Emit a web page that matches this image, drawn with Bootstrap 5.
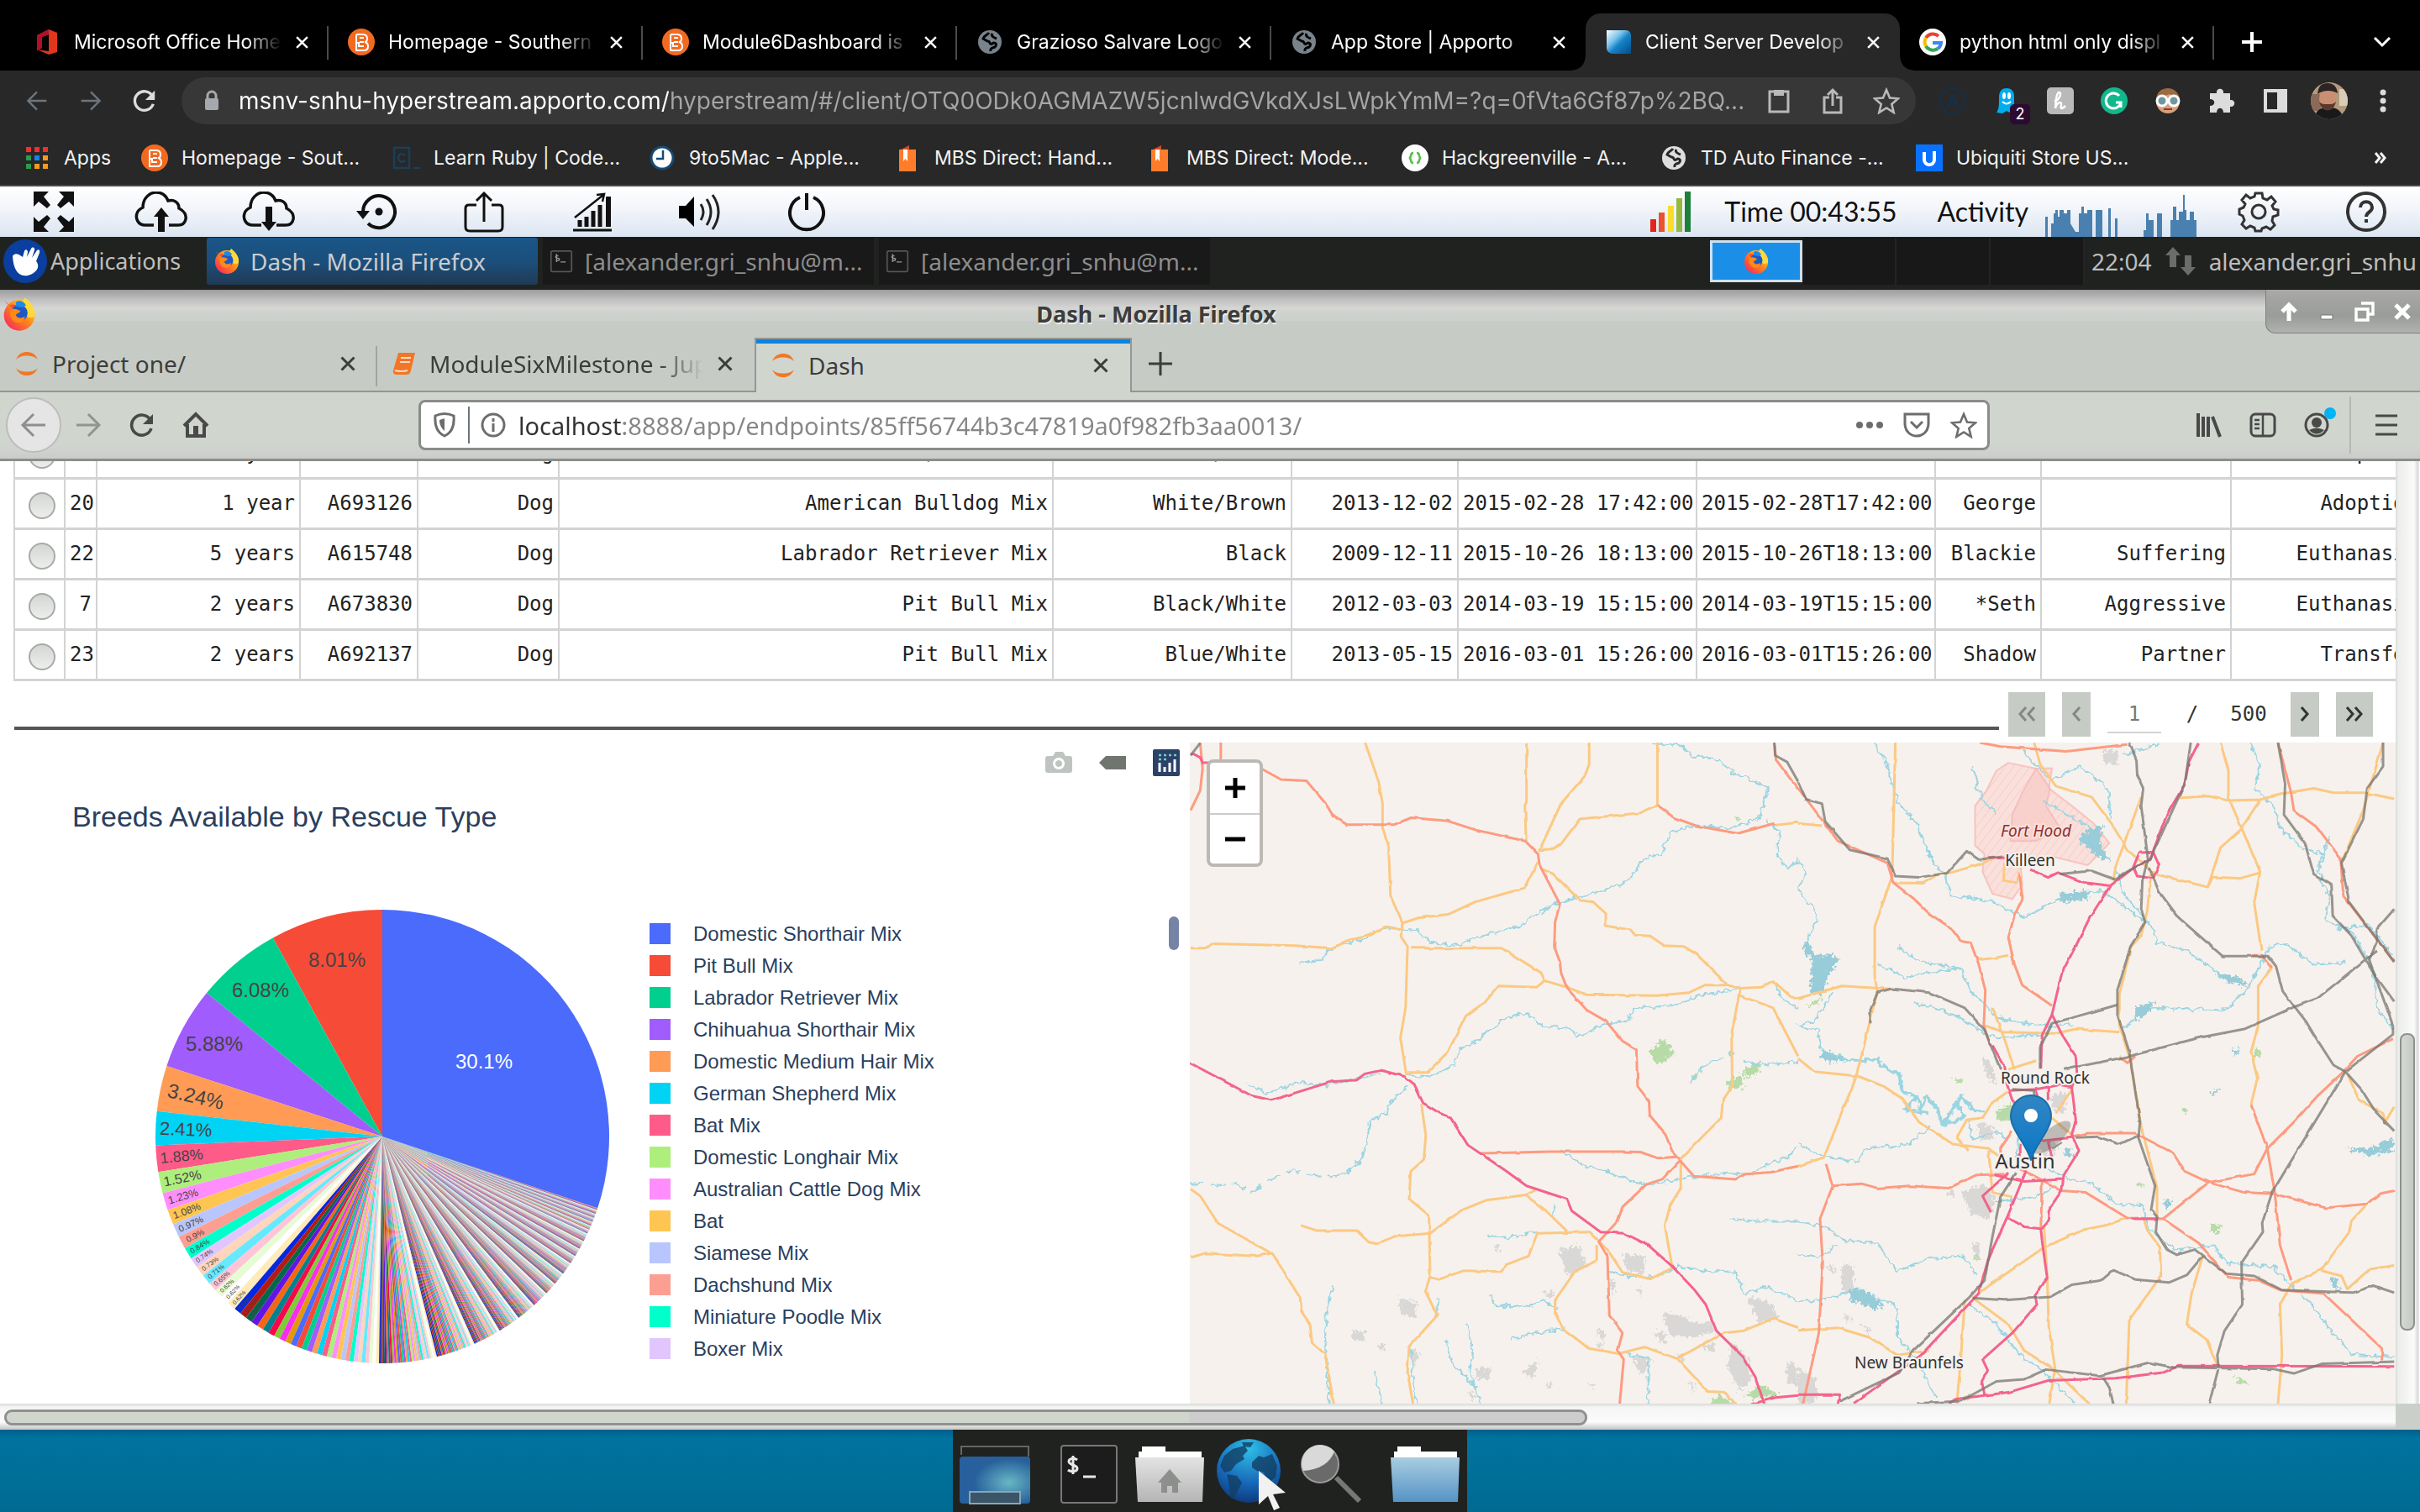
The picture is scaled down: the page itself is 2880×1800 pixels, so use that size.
<!DOCTYPE html>
<html lang="en">
<head>
<meta charset="utf-8">
<title>Client Server Development</title>
<meta name="viewport" content="width=device-width, initial-scale=1">
<link href="https://cdn.jsdelivr.net/npm/bootstrap@5.3.0/dist/css/bootstrap.min.css" rel="stylesheet">
<style>
  body { font-family: Inter, "Liberation Sans", sans-serif; font-size: 24px; line-height: 32px; background: #000; overflow: hidden; }
  svg { display: block; flex: none; overflow: visible; }
  a { color: inherit; text-decoration: none; }
  .plain { border: 0; background: none; padding: 0; color: inherit; display: flex; align-items: center; justify-content: center; flex: none; }
  .line { fill: none; stroke: currentColor; stroke-width: 3; }
  .i32 { width: 32px; height: 32px; }
  .i48 { width: 48px; height: 48px; }
  .clip-text { overflow: hidden; white-space: nowrap; line-height: 44px; }

  /* outer browser */
  .strip { height: 84px; padding: 16px 0 0 17px; background: #000; color: #fff; }
  .strip-tab { position: relative; width: 374px; padding: 0 14px 0 23px; border-right: 2px solid transparent; }
  .strip-tab::after { content: ""; position: absolute; right: -2px; top: 15px; height: 40px; width: 2px; background: #4b4b4b; }
  .strip-tab.quiet::after { display: none; }
  .strip-tab .clip-text { flex: 1; margin-left: 16px; font-size: 23px; -webkit-mask-image: linear-gradient(90deg, #000 80%, transparent 97%); }
  .strip-tab.on { background: #282828; border-radius: 18px 18px 0 0; }
  .strip-tab.on::before, .strip-tab.on::after { display: block; content: ""; position: absolute; top: auto; bottom: 0; width: 16px; height: 16px; }
  .strip-tab.on::before { left: -16px; background: radial-gradient(circle at 0 0, #000 15px, #282828 16px); }
  .strip-tab.on::after { right: -18px; background: radial-gradient(circle at 100% 0, #000 15px, #282828 16px); }
  .tools { height: 72px; background: #282828; color: #dcdcdc; padding-left: 12px; }
  .tools .plain { width: 64px; height: 56px; }
  .omni { height: 56px; border-radius: 28px; background: #373737; padding: 0 3px 0 20px; margin-left: 12px; color: #b9b9b9; }
  .omni input { flex: 1; min-width: 0; border: 0; outline: 0; font-size: 28px; padding: 0; margin-left: 16px; -webkit-text-fill-color: transparent; -webkit-background-clip: text; background-clip: text; background-color: transparent; background-image: linear-gradient(90deg, #fff 512px, #a5a5a5 512px); }
  .ghost-count { position: absolute; right: 4px; bottom: 0; width: 24px; height: 24px; line-height: 24px; font-size: 18px; background: #2d0a30; color: #fff; border-radius: 5px; text-align: center; }
  .favs { height: 66px; background: #282828; color: #f2f2f2; border-bottom: 2px solid #4a4a4a; padding-left: 28px; font-size: 23px; display: grid; align-items: center; grid-template-columns: 140px 300px 304px 292px 300px 304px 308px 304px 1fr; }
  .favs a { display: flex; align-items: center; gap: 16px; white-space: nowrap; }

  /* streaming toolbar */
  .stream { height: 60px; background: linear-gradient(#fff, #f2f5fa 45%, #dbe5f1); color: #111; font-family: Lato, sans-serif; font-size: 32px; }
  .stream .plain { width: 128px; height: 60px; }
  .clock { margin: 0 48px 0 40px; }

  /* desktop panel */
  .panel { height: 63px; background: #20221f; color: #bdbdbd; font-family: "Noto Sans", sans-serif; font-size: 28px; padding-bottom: 6px; }
  .panel .task { width: 394px; height: 56px; padding: 0 8px; gap: 14px; margin-right: 6px; justify-content: flex-start; color: #8d8d8d; background: #191919; }
  .panel .task.on { background: linear-gradient(#1a5687, #1b4f7c 50%, #213a55); color: #c9ccd0; border-radius: 3px; gap: 12px; }
  .apps.plain { width: 246px; padding-left: 4px; justify-content: flex-start; font-size: 27px; }
  .desk { width: 112px; height: 56px; background: #181818; border-right: 2px solid #242424; }
  .desk.on { background: #1b8fe8; border: 3px solid #cfe0ee; height: 50px; width: 110px; }

  /* inner browser */
  .win { font-family: "Noto Sans", sans-serif; font-size: 28px; color: #3c3d3c; }
  .win-title { height: 57px; padding: 4px 0 4px 2px; background: linear-gradient(#9c9c9c 0, #bfc0bf 12px, #d6d6d5 22px, #ced3cc 27px, #cecfce 37px, #c7cbc5 38px); font-size: 27px; font-weight: 700; text-shadow: 1px 2px 0 #eee; }
  .win-title span { padding: 9px 0 0 12px; }
  .win-btns { margin-top: -4px; height: 52px; width: 184px; border-radius: 0 0 0 12px; background: linear-gradient(#a9aaa8, #9a9c99 60%, #b0b2af); border: 1px solid #7d7f7c; color: #fff; border-top: 0; border-right: 0; }
  .win-btns .plain { width: 45px; }
  .win-tabs { height: 65px; background: #c7cbc5; }
  .win-tab { position: relative; width: 449px; padding: 0 25px 0 18px; border-bottom: 2px solid #949694; }
  .win-tab .clip-text { flex: 1; margin-left: 16px; }
  .win-tab.sep::after { content: ""; position: absolute; right: 0; top: 10px; height: 48px; width: 2px; background: #a2a4a1; }
  .win-tab.on { background: #d0d5ce; border: 2px solid #949694; border-bottom: 0; }
  .win-tab.on::before { content: ""; position: absolute; left: 0; right: 0; top: 0; height: 5px; background: #0a84e0; }
  .fade-end { -webkit-mask-image: linear-gradient(90deg, #000 84%, transparent); }
  .win-nav { height: 82px; background: linear-gradient(#d0d5ce 80%, #cbcccb); border-bottom: 3px solid #8c8e8c; color: #484948; padding-left: 7px; }
  .win-nav .plain { width: 64px; height: 66px; }
  .back-btn.plain { width: 66px; border-radius: 50%; background: #e4e5e4; border: 2px solid #bcbdbb; color: #8d8e8d; }
  .addr { height: 60px; width: 1870px; margin-left: 233px; background: #fff; border: 3px solid #8a8c8a; border-radius: 8px; color: #6c6d6c; }
  .addr .plain { width: 56px; }
  .addr input { flex: 1; min-width: 0; border: 0; outline: 0; padding: 2px 0 0 2px; font-size: 29px; -webkit-text-fill-color: transparent; -webkit-background-clip: text; background-clip: text; background-image: linear-gradient(90deg, #303130 127px, #858685 127px); }

  .view { background: #fff; min-height: 0; }
  .doc { min-width: 0; overflow: hidden; }
  .records { table-layout: fixed; width: 3012px; margin: -41px 0 0 16px; border-collapse: collapse; font: 24px/32px "DejaVu Sans Mono", monospace; color: #222; }
  .records td { height: 60px; padding: 0 5px; border: 2px solid #d3d3d3; border-top-width: 3px; border-bottom-width: 3px; text-align: right; white-space: nowrap; overflow: hidden; }
  .records td:first-child { padding: 0 2px 0 8px; }
  .records td:last-child { padding-right: 151px; }
  .records input { appearance: none; display: block; width: 32px; height: 32px; margin: 6px auto 0; border: 2px solid #a7aaa6; border-radius: 50%; background: linear-gradient(#d3d7d2, #eceeec); }
  .pager { height: 73px; padding: 0 27px 0 17px; gap: 20px; font: 24px/32px "DejaVu Sans Mono", monospace; color: #333; }
  .pager hr { margin: 0 -9px 15px 0; border: 0; height: 4px; background: #565656; opacity: 1; align-self: flex-end; flex: 1; }
  .pager .plain { width: 44px; height: 53px; background: #c7cbc5; margin-top: 13px; }
  .pager .thin { width: 34px; }
  .pager .plain:disabled { color: #858785; }
  .pager input { width: 64px; height: 44px; border: 0; border-bottom: 2px solid #d3d3d3; text-align: center; color: #777; padding: 0; margin: 18px 0 0; }
  .pager span { width: 34px; text-align: center; margin-top: 23px; }
  .pager span.total { width: 60px; }

  .plot { width: 1416px; font-family: "Liberation Sans", sans-serif; color: #2a3f5f; flex: none; }
  .modebar { gap: 32px; padding: 8px 12px 0 0; }
  .plot h2 { font-size: 34px; line-height: 40px; margin: 28px 0 81px 86px; font-weight: 400; }
  .pie { width: 560px; height: 560px; margin-left: 175px; }
  .legend-list { margin: 20px 0 0 38px; padding: 0; list-style: none; line-height: 38px; font-size: 24px; }
  .legend-list li { display: flex; align-items: center; gap: 27px; height: 38px; white-space: nowrap; }
  .legend-list i { width: 25px; height: 25px; }
  .legend-bar { width: 12px; height: 40px; border-radius: 6px; background: #7583a5; margin: 18px 13px 0 auto; }

  .geo { position: relative; background: #f6f1ed; overflow: hidden; }
  .geo svg { width: 100%; height: 100%; }
  .geo path { vector-effect: non-scaling-stroke; fill: none; stroke-linejoin: round; }
  .geo .minor path { stroke: #fcc982; stroke-width: 3; }
  .geo .major path { stroke: #fd9b80; stroke-width: 3; }
  .geo .mway path { stroke: #f4638b; stroke-width: 3; }
  .geo .rail path { stroke: #777670; stroke-width: 3; opacity: .75; }
  .geo .water path { stroke: #9bd5e2; stroke-width: 2; }
  .geo .lake path { fill: #97ccd8; stroke: none; }
  .geo .built path { fill: #d9d8d6; stroke: none; }
  .geo .wood path { fill: #b7dba7; stroke: none; }
  .geo text { font-family: "Noto Sans", sans-serif; text-anchor: middle; fill: #333; paint-order: stroke; stroke: #f6f1ed; stroke-width: 4px; stroke-linejoin: round; }
  .zoomer { position: absolute; left: 20px; top: 20px; width: 67px; border: 4px solid #bcb9b5; border-radius: 8px; background: #fff; overflow: hidden; color: #000; }
  .zoomer .plain { width: 100%; height: 60px; }
  .zoomer .plain + .plain { border-top: 2px solid #ccc; }

  .vbar { width: 29px; flex: none; background: linear-gradient(90deg, #d8dad7 0, #eceeeb 3px, #fbfbfb 22px, #d5d5d5 27px, #fff 28px); padding-top: 681px; }
  .vbar div { width: 18px; height: 354px; margin-left: 5px; border: 2px solid #8f918f; border-radius: 8px; background: linear-gradient(90deg, #d5d9d3, #c5c9c4); }
  .hbar { height: 31px; background: linear-gradient(#d8dad7 0, #f4f5f4 4px, #fbfbfb 22px, #c9cac9 30px); padding: 7px 0 0 5px; position: relative; }
  .hbar div { width: 1884px; height: 19px; border: 3px solid #8f918f; border-radius: 9px; background: linear-gradient(90deg, #d0d5ce 75%, #cccdcc 75%); }
  .hbar i { position: absolute; right: 0; top: 0; width: 29px; height: 100%; background: #cbcfca; }
  .ground { height: 98px; background: linear-gradient(#00608a, #0073a0 10px, #006f98 60%, #006a92); }
  .dock { width: 612px; background: #20221f; padding: 10px 2px 0; }
  .dock .plain { width: 96px; height: 86px; }
</style>
</head>
<body class="vh-100 d-flex flex-column">

<svg width="0" height="0" class="position-absolute" aria-hidden="true">
  <defs>
    <linearGradient id="gFlame" x1="1" y1="0" x2="0" y2="1"><stop offset="0" stop-color="#fff44f"/><stop offset=".45" stop-color="#ff8a16"/><stop offset="1" stop-color="#f5156c"/></linearGradient>
    <linearGradient id="gFold" x1="0" y1="0" x2="0" y2="1"><stop offset="0" stop-color="#a9cde2"/><stop offset="1" stop-color="#5593c4"/></linearGradient>
    <linearGradient id="gGrey" x1="0" y1="0" x2="0" y2="1"><stop offset="0" stop-color="#e3e3e3"/><stop offset="1" stop-color="#b5b5b5"/></linearGradient>
    <linearGradient id="gBlue" x1="0" y1="0" x2="1" y2="1"><stop offset="0" stop-color="#fff"/><stop offset=".35" stop-color="#7cc4ec"/><stop offset=".55" stop-color="#1583c8"/><stop offset="1" stop-color="#044c86"/></linearGradient>
    <symbol id="x" viewBox="0 0 16 16"><path d="M2 2l12 12M14 2L2 14" fill="none" stroke="currentColor" stroke-width="2.4"/></symbol>
    <symbol id="fox" viewBox="0 0 32 32"><circle cx="16" cy="17" r="14" fill="url(#gFlame)"/><path d="M21 1c5 4 10 9 9 17-3 2-8 1-11-4-2-4-1-8 2-13z" fill="#ffd93b"/><path d="M3 4c1 2 2 3 4 4 2-1 4-1 6 0l-2 4z" fill="#ff4b36"/><circle cx="16" cy="15" r="7.5" fill="#1d57c8"/><path d="M8 12c4-2 7 0 9 1-1 3-4 2-4 4 1 3 5 3 8 1 0 5-5 7-9 5s-5-7-4-11z" fill="#ff8a16"/><path d="M13 5c3-2 7-1 9 3l-3 2-6-1z" fill="#1d8ae6"/></symbol>
    <symbol id="bb" viewBox="0 0 32 32"><circle cx="16" cy="16" r="16" fill="#f26a21"/><path d="M10 7h8q5 0 5 5 0 4-3 4 4 1 4 5 0 5-5 5h-9v-4M10 7v10h3v4h6M14 11h5M14 16h5M10 17v5" fill="none" stroke="#fff" stroke-width="2"/></symbol>
    <symbol id="globe" viewBox="0 0 28 28"><circle cx="14" cy="14" r="14" fill="currentColor"/><path d="M13 3c-2 3-6 3-7 7l5 3c4-1 2 5 6 3 2-2 7 0 3 4-3 1-6 1-5 5M17 4c-2 3 2 5 5 6" fill="none" stroke="var(--hole)" stroke-width="3"/></symbol>
    <symbol id="term" viewBox="0 0 32 32"><rect x="2" y="2" width="28" height="28" rx="2" fill="#191919" stroke="#555" stroke-width="2"/><path d="M12 9c-4-2-5 3-1 3s3 4-2 3M9.500 6v11M15 17h7" fill="none" stroke="#999" stroke-width="1.500"/></symbol>
    <symbol id="cloud" viewBox="0 0 64 48"><path d="M23 40H13C4 40 1 32 3 26c1-4 5-6 7-7C10 8 18 1 26 1c8 0 12 5 14 10 7-2 13 2 13 9 6 3 9 8 8 13s-5 7-9 7H41" fill="none" stroke="currentColor" stroke-width="3.500"/></symbol>
    <symbol id="jup" viewBox="0 0 30 32"><path d="M1 11C4 3 10 1 15 1s11 2 14 10C24 4 6 4 1 11zM1 21c3 8 9 10 14 10s11-2 14-10c-5 7-23 7-28 0z" fill="#f37626"/></symbol>
    <symbol id="star" viewBox="0 0 32 32"><path d="M16 3l4 9.500 10 .8-7.700 6.600 2.400 10L16 24.500 7.300 30l2.400-10L2 13.300l10-.8z" fill="none" stroke="currentColor" stroke-width="2.600"/></symbol>
    <symbol id="book" viewBox="0 0 24 32"><path d="M2 7l12-6v30H2z" fill="#d24a25"/><rect x="2" y="6" width="20" height="26" fill="#ff7c2b"/><path d="M7 6h5v14l-2.500-3L7 20z" fill="#fff"/></symbol>
    <symbol id="reload" viewBox="0 0 32 32"><path d="M26 10A12 12 0 1 0 27 20" fill="none" stroke="currentColor" stroke-width="3.600"/><path d="M29 3v12H17z" fill="currentColor"/></symbol>
    <symbol id="left" viewBox="0 0 32 32"><path d="M30 16H4M16 3L3 16l13 13" fill="none" stroke="currentColor" stroke-width="3"/></symbol>
    <symbol id="right" viewBox="0 0 32 32"><path d="M2 16h26M16 3l13 13-13 13" fill="none" stroke="currentColor" stroke-width="3"/></symbol>
  </defs>
</svg>

<header>
  <nav class="strip d-flex" aria-label="Tabs">
    <div class="strip-tab d-flex align-items-center"><svg class="i32" viewBox="0 0 32 32"><path d="M4 8L18 1l10 4v23l-10 3-14-6 14 2V7l-8 3v13l-6 3z" fill="#e0361b"/><path d="M4 8L18 1v6l-8 3v13l-6 3z" fill="#b01128"/></svg><span class="clip-text">Microsoft Office Home</span><button class="plain i32" aria-label="Close tab"><svg width="17" height="17"><use href="#x"/></svg></button></div>
    <div class="strip-tab d-flex align-items-center"><svg class="i32"><use href="#bb"/></svg><span class="clip-text">Homepage - Southern</span><button class="plain i32" aria-label="Close tab"><svg width="17" height="17"><use href="#x"/></svg></button></div>
    <div class="strip-tab d-flex align-items-center"><svg class="i32"><use href="#bb"/></svg><span class="clip-text">Module6Dashboard is</span><button class="plain i32" aria-label="Close tab"><svg width="17" height="17"><use href="#x"/></svg></button></div>
    <div class="strip-tab d-flex align-items-center"><svg class="i32" viewBox="-2 -2 32 32" style="color:#79838c;--hole:#000"><use href="#globe" width="28" height="28"/></svg><span class="clip-text">Grazioso Salvare Logo</span><button class="plain i32" aria-label="Close tab"><svg width="17" height="17"><use href="#x"/></svg></button></div>
    <div class="strip-tab quiet d-flex align-items-center"><svg class="i32" viewBox="-2 -2 32 32" style="color:#79838c;--hole:#000"><use href="#globe" width="28" height="28"/></svg><span class="clip-text">App Store | Apporto</span><button class="plain i32" aria-label="Close tab"><svg width="17" height="17"><use href="#x"/></svg></button></div>
    <div class="strip-tab on d-flex align-items-center"><svg class="i32" viewBox="0 0 32 32"><path d="M2 2h23c4 0 6 3 6 7v21H10c-5 0-8-3-8-7z" fill="url(#gBlue)"/></svg><span class="clip-text">Client Server Develop</span><button class="plain i32" aria-label="Close tab"><svg width="17" height="17"><use href="#x"/></svg></button></div>
    <div class="strip-tab d-flex align-items-center"><svg class="i32" viewBox="0 0 32 32"><circle cx="16" cy="16" r="16" fill="#fff"/><g fill="none" stroke-width="4"><path d="M23 9A10 10 0 0 0 8 11" stroke="#ea4335"/><path d="M8 11a10 10 0 0 0 0 10" stroke="#fbbc05"/><path d="M8 21a10 10 0 0 0 14 3" stroke="#34a853"/><path d="M22 24a10 10 0 0 0 4-7H16" stroke="#4285f4"/></g></svg><span class="clip-text">python html only displ</span><button class="plain i32" aria-label="Close tab"><svg width="17" height="17"><use href="#x"/></svg></button></div>
    <button class="plain ms-4" aria-label="New tab" style="width:42px"><svg width="24" height="24" viewBox="0 0 24 24"><path d="M12 0v24M0 12h24" stroke="#fff" stroke-width="4"/></svg></button>
    <button class="plain ms-auto me-3" aria-label="Search tabs" style="width:58px"><svg width="20" height="12" viewBox="0 0 20 12"><path class="line" d="M1 1l9 9 9-9"/></svg></button>
  </nav>

  <div class="tools d-flex align-items-center">
    <button class="plain text-secondary" aria-label="Back"><svg width="26" height="26"><use href="#left"/></svg></button>
    <button class="plain text-secondary" aria-label="Forward"><svg width="26" height="26"><use href="#right"/></svg></button>
    <button class="plain" aria-label="Reload"><svg width="30" height="30"><use href="#reload"/></svg></button>
    <div class="omni flex-grow-1 d-flex align-items-center">
      <svg class="i32" viewBox="0 0 32 32"><rect x="8" y="13" width="16" height="14" rx="2" fill="#a5a9ae"/><path d="M11 14V10a5 5 0 0 1 10 0v4" fill="none" stroke="#a5a9ae" stroke-width="3"/></svg>
      <input type="text" aria-label="Address" value="msnv-snhu-hyperstream.apporto.com/hyperstream/#/client/OTQ0ODk0AGMAZW5jcnlwdGVkdXJsLWpkYmM=?q=0fVta6Gf87p%2BQ...">
      <button class="plain" aria-label="Copy"><svg class="i32" viewBox="0 0 32 32"><path class="line" d="M5 5h22v24H5z"/><path d="M10 3h12v7H10z" fill="currentColor"/></svg></button>
      <button class="plain" aria-label="Share"><svg class="i32" viewBox="0 0 32 32"><path class="line" d="M12 12H6v18h20V12h-6M16 22V3M10 9l6-6 6 6" stroke-width="2.600"/></svg></button>
      <button class="plain" aria-label="Bookmark"><svg class="i32"><use href="#star"/></svg></button>
    </div>
    <div class="d-flex ms-2 ps-1">
      <button class="plain" aria-label="Apollo"><svg class="i32" viewBox="0 0 32 32"><circle cx="16" cy="16" r="15" fill="none" stroke="#14304a" stroke-width="2"/><path d="M10 23l6-14 6 14M13 19h7" fill="none" stroke="#14304a" stroke-width="3"/></svg></button>
      <button class="plain position-relative" aria-label="Ghostery"><svg class="i32" viewBox="0 0 32 32"><path d="M7 12c0-8 4-11 9-11s9 3 9 10v15l-5 4-4-2-5 3-7-1c3-4 3-9 3-18z" fill="#00aef0"/><ellipse cx="13" cy="10" rx="2" ry="4" fill="#fff"/><ellipse cx="19" cy="10" rx="2" ry="4" fill="#fff"/><path d="M11 17q5 5 10 0" stroke="#fff" stroke-width="2" fill="none"/></svg><span class="ghost-count">2</span></button>
      <button class="plain" aria-label="Honey"><svg class="i32" viewBox="0 0 32 32"><rect width="32" height="32" rx="5" fill="#b9b9b9"/><path d="M9 17c7-3 9-12 5-11-4 2-3 14-4 19 2-8 8-9 7-4-1 4 0 6 5 1" fill="none" stroke="#fff" stroke-width="2.500"/></svg></button>
      <button class="plain" aria-label="Grammarly"><svg class="i32" viewBox="0 0 32 32"><circle cx="16" cy="16" r="16" fill="#11b88c"/><path d="M22 10a9 9 0 1 0 2 8h-6M24 18v6" fill="none" stroke="#fff" stroke-width="3"/></svg></button>
      <button class="plain" aria-label="Profile switcher"><svg class="i32" viewBox="0 0 32 32"><circle cx="16" cy="17" r="14" fill="#d9a07c"/><path d="M2 14C3 4 10 1 16 1s13 4 14 13L18 8z" fill="#9b6b43"/><circle cx="9" cy="16" r="6" fill="#6e97a0" stroke="#fff" stroke-width="3"/><circle cx="23" cy="16" r="6" fill="#6e97a0" stroke="#fff" stroke-width="3"/><path d="M11 26h10" stroke="#8a3a34" stroke-width="2"/></svg></button>
      <button class="plain" aria-label="Extensions"><svg class="i32" viewBox="0 0 32 32"><path d="M2 7h8c-1-7 9-7 8 0h8v8c7-1 7 9 0 8v7h-8c0-7-8-7-8 0H2v-8c7 0 7-8 0-8z" fill="currentColor"/></svg></button>
      <button class="plain" aria-label="Side panel"><svg class="i32" viewBox="0 0 32 32"><path d="M2 2h28v28H2zM6 6v20h12V6z" fill="currentColor" fill-rule="evenodd"/></svg></button>
      <button class="plain" aria-label="Profile"><svg width="44" height="44" viewBox="0 0 44 44"><clipPath id="face"><circle cx="22" cy="22" r="22"/></clipPath><g clip-path="url(#face)"><path d="M0 0h44v44H0z" fill="#b49a7c"/><path d="M0 14h12v20H0z" fill="#8b6a58"/><path d="M34 8h10v20H34z" fill="#d9cdb8"/><path d="M4 44c2-12 8-14 18-14s14 4 18 14z" fill="#18191b"/><ellipse cx="20" cy="20" rx="10" ry="13" fill="#c98f73"/><path d="M10 23c3 14 17 14 20 0-3 3-5 3-10 3s-7 0-10-3z" fill="#5b3a2b"/><path d="M8 14C9 4 13 1 20 1s11 4 12 12c-7-4-17-4-24 1z" fill="#2b2422"/></g></svg></button>
      <button class="plain" aria-label="Menu"><svg width="8" height="28" viewBox="0 0 8 28"><circle cx="4" cy="4" r="3.500" fill="currentColor"/><circle cx="4" cy="14" r="3.500" fill="currentColor"/><circle cx="4" cy="24" r="3.500" fill="currentColor"/></svg></button>
    </div>
    <span class="ms-2 ps-1"></span>
  </div>

  <nav class="favs" aria-label="Bookmarks">
    <a href="#"><svg class="i32" viewBox="-3 -3 32 32"><path d="M0 0h6v6H0zM10 0h6v6h-6zM20 0h6v6h-6z" fill="#f0302f"/><path d="M0 10h6v6H0zM0 20h6v6H0z" fill="#2d9a4e"/><path d="M10 10h6v6h-6z" fill="#1484f0"/><path d="M20 10h6v6h-6zM10 20h6v6h-6zM20 20h6v6h-6z" fill="#f59a1d"/></svg>Apps</a>
    <a href="#"><svg class="i32"><use href="#bb"/></svg>Homepage - Sout...</a>
    <a href="#"><svg class="i32" viewBox="0 0 32 32"><path d="M1 4h18v24H1zM14 13c-5-4-8 0-8 3s3 7 8 3M24 28h8" fill="none" stroke="#1b3f57" stroke-width="2.500"/></svg>Learn Ruby | Code...</a>
    <a href="#"><svg class="i32" viewBox="0 0 32 32"><circle cx="16" cy="16" r="13" fill="#fff" stroke="#154a75" stroke-width="3"/><path d="M17 7v10h-8" fill="none" stroke="#154a75" stroke-width="2.500"/></svg>9to5Mac - Apple...</a>
    <a href="#"><svg class="i32"><use href="#book"/></svg>MBS Direct: Hand...</a>
    <a href="#"><svg class="i32"><use href="#book"/></svg>MBS Direct: Mode...</a>
    <a href="#"><svg class="i32" viewBox="0 0 32 32"><circle cx="16" cy="16" r="16" fill="#fff"/><path d="M14 10c-5 0-1 5-5 6 4 1 0 6 5 6M18 10c5 0 1 5 5 6-4 1 0 6-5 6" fill="none" stroke="#59bd45" stroke-width="2.500"/></svg>Hackgreenville - A...</a>
    <a href="#"><svg class="i32" viewBox="-2 -2 32 32" style="color:#dedede;--hole:#282828"><use href="#globe" width="28" height="28"/></svg>TD Auto Finance -...</a>
    <div class="d-flex justify-content-between"><a href="#"><svg class="i32" viewBox="0 0 32 32"><path d="M0 0h32v32H0z" fill="#0871ff"/><path d="M10 9v9c0 8 12 8 12 0V8" fill="none" stroke="#fff" stroke-width="4"/></svg>Ubiquiti Store US...</a><button class="plain me-4 pe-3" aria-label="More bookmarks"><svg width="14" height="14" viewBox="0 0 14 14"><path class="line" d="M1 1l5 6-5 6M7 1l5 6-5 6" stroke-width="2"/></svg></button></div>
  </nav>

  <div class="stream d-flex align-items-center">
    <button class="plain" aria-label="Full screen"><svg class="i48" viewBox="0 0 48 48"><path d="M0 0h18l-6 6 8 10-4 4-10-8-6 6zM48 0v18l-6-6-10 8-4-4 8-10-6-6zM0 48V30l6 6 10-8 4 4-8 10 6 6zM48 48H30l6-6-8-10 4-4 10 8 6-6z" fill="#111"/></svg></button>
    <button class="plain" aria-label="Upload"><svg width="64" height="48" viewBox="0 0 64 48"><use href="#cloud"/><path d="M32 48V24" stroke="#111" stroke-width="8"/><path d="M23 30l9-11 9 11z" fill="#111"/></svg></button>
    <button class="plain" aria-label="Download"><svg width="64" height="48" viewBox="0 0 64 48"><use href="#cloud"/><path d="M32 18v22" stroke="#111" stroke-width="8"/><path d="M23 36l9 11 9-11z" fill="#111"/></svg></button>
    <button class="plain" aria-label="Restore"><svg class="i48" viewBox="0 0 48 48"><path d="M8 24a19 19 0 1 1 6 14" fill="none" stroke="#111" stroke-width="4"/><path d="M0 23h16l-8 10z" fill="#111"/><circle cx="27" cy="24" r="4.500" fill="#111"/></svg></button>
    <button class="plain" aria-label="Share"><svg class="i48" viewBox="0 0 48 48"><path class="line" stroke-width="4" d="M15 16H6q-4 0-4 4v22q0 5 5 5h34q5 0 5-5V20q0-4-4-4h-9M24 36V2M15 11l9-9 9 9"/></svg></button>
    <button class="plain" aria-label="Statistics"><svg class="i48" viewBox="0 0 48 48"><path d="M2 46h46" stroke="#111" stroke-width="3"/><path d="M10 42v-8M18 42V30M26 42V23M34 42V16" stroke="#111" stroke-width="5"/><path d="M44 42V6" stroke="#111" stroke-width="6"/><path d="M4 31L38 4M30 4l9-1-2 9" fill="none" stroke="#111" stroke-width="2.500"/></svg></button>
    <button class="plain" aria-label="Sound"><svg class="i48" viewBox="0 0 48 48"><path d="M0 17h8L18 6v36L8 32H0z" fill="#000"/><path d="M26 15q6 9 0 19M33 9q10 15 0 31M40 4q14 20 0 41" fill="none" stroke="#222" stroke-width="3"/></svg></button>
    <button class="plain" aria-label="Power"><svg class="i48" viewBox="0 0 48 48"><path d="M16 7a20 20 0 1 0 16 0M24 2v20" fill="none" stroke="#111" stroke-width="4"/></svg></button>
    <div class="ms-auto d-flex align-items-center">
      <svg class="i48" viewBox="0 0 48 48"><path d="M0 33h7v15H0z" fill="#e3251d"/><path d="M10 25h7v23h-7z" fill="#e8532b"/><path d="M21 17h7v31h-7z" fill="#f8de2a"/><path d="M31 8h7v40h-7z" fill="#94b93e"/><path d="M41 0h7v48h-7z" fill="#1c8039"/></svg>
      <span class="clock">Time 00:43:55</span><span class="me-3 pe-1">Activity</span>
      <svg width="182" height="60" viewBox="0 0 182 60"><path fill="#4a80b0" d="M0 60V36h3v24h4V44h3V32h2V28h3v8h2V28h5v4h4V28h4v16l6 10h4V32h3V24h3v8h4V28h6v32h4V28h8v32h7V26h3v34h5V38h3v22zM117 60V52h3V32h3v8h6v20h4V32h6v28h10V40h3V24h4v16h3V30h5V10h2V28h2V40h4V30h5v10h3v20z"/></svg>
      <button class="plain ms-2" aria-label="Settings"><svg class="i48" viewBox="0 0 48 48"><path d="M20 2h8l1 6 5 2 5-4 5 6-4 5 2 4 5 1v6l-6 2-1 5 3 5-5 5-5-3-5 2-1 3h-7l-1-4-5-2-5 3-5-5 3-5-2-5-4-2v-6l5-2 2-4-4-5 5-6 5 4 5-2z" fill="none" stroke="#333" stroke-width="3"/><circle cx="24" cy="24" r="8" fill="none" stroke="#333" stroke-width="3"/></svg></button>
      <button class="plain" aria-label="Help"><svg class="i48" viewBox="0 0 48 48"><circle cx="24" cy="24" r="22" fill="none" stroke="#333" stroke-width="4"/><path d="M17 19c0-9 14-9 14 0 0 6-7 5-7 11M24 33v4" fill="none" stroke="#333" stroke-width="4"/></svg></button>
    </div>
  </div>

  <div class="panel d-flex align-items-center">
    <button class="plain apps"><svg width="52" height="52" viewBox="0 0 52 52" class="me-1"><circle cx="26" cy="26" r="26" fill="#0a3fa0"/><path d="M11 20c2-4 6-3 9-1l3 2 2-7c1-3 4-2 4 1l-1 6 5-10c2-3 5-1 4 2l-3 9 6-9c2-2 4 0 3 3l-4 10c6 7-1 15-10 17-12 2-17-8-18-23z" fill="#fff"/></svg>Applications</button>
    <button class="plain task on"><svg class="i32"><use href="#fox"/></svg>Dash - Mozilla Firefox</button>
    <button class="plain task"><svg width="28" height="28"><use href="#term"/></svg>[alexander.gri_snhu@m...</button>
    <button class="plain task"><svg width="28" height="28"><use href="#term"/></svg>[alexander.gri_snhu@m...</button>
    <div class="ms-auto d-flex align-items-center">
      <button class="plain desk on" aria-label="Workspace 1"><svg class="i32"><use href="#fox"/></svg></button>
      <button class="plain desk" aria-label="Workspace 2"></button><button class="plain desk" aria-label="Workspace 3"></button><button class="plain desk" aria-label="Workspace 4"></button>
      <span class="ms-2 me-3">22:04</span>
      <svg width="36" height="34" viewBox="0 0 36 34"><path d="M0 10L9 0l9 10h-5v14H5V10zM18 24h5V10h8v14h5l-9 10z" fill="#6c6c6c"/></svg>
      <span class="ms-3 me-1">alexander.gri_snhu</span>
    </div>
  </div>
</header>

<main class="win d-flex flex-column flex-grow-1" style="min-height:0">
  <div class="win-title d-flex align-items-start">
    <svg width="42" height="42" class="mt-1"><use href="#fox"/></svg>
    <span class="flex-grow-1 text-center">Dash - Mozilla Firefox</span>
    <div class="win-btns d-flex ps-1">
      <button class="plain" aria-label="Shade"><svg width="22" height="22" viewBox="0 0 22 22"><path d="M11 22V4M3 11l8-8 8 8" fill="none" stroke="#fff" stroke-width="5"/></svg></button>
      <button class="plain" aria-label="Minimize"><svg width="22" height="22" viewBox="0 0 22 22"><path d="M4 15h14v5H4z" fill="#fff" stroke="#777"/></svg></button>
      <button class="plain" aria-label="Restore"><svg width="26" height="24" viewBox="0 0 26 24"><path d="M9 2h14v13h-5M3 9h14v13H3z" fill="none" stroke="#fff" stroke-width="3.500"/></svg></button>
      <button class="plain" aria-label="Close"><svg width="20" height="20" viewBox="0 0 20 20"><path d="M2 2l16 16M18 2L2 18" stroke="#fff" stroke-width="5"/></svg></button>
    </div>
  </div>
  <nav class="win-tabs d-flex" aria-label="Firefox tabs">
    <div class="win-tab sep d-flex align-items-center"><svg width="28" height="32"><use href="#jup"/></svg><span class="clip-text">Project one/</span><button class="plain" aria-label="Close tab"><svg width="20" height="20"><use href="#x"/></svg></button></div>
    <div class="win-tab d-flex align-items-center"><svg width="28" height="28" viewBox="0 0 28 28"><path d="M7 1h20l-5 21q-1 5-5 5H4q-4-1-3-5z" fill="#f37626"/><path d="M10 7h12M9 12h12M3 22q8 2 15 0" stroke="#f6dcc8" stroke-width="2" fill="none"/></svg><span class="clip-text fade-end">ModuleSixMilestone - Jupyter</span><button class="plain ms-3" aria-label="Close tab"><svg width="20" height="20"><use href="#x"/></svg></button></div>
    <div class="win-tab on d-flex align-items-center"><svg width="28" height="32"><use href="#jup"/></svg><span class="clip-text">Dash</span><button class="plain" aria-label="Close tab"><svg width="20" height="20"><use href="#x"/></svg></button></div>
    <div class="flex-grow-1 d-flex align-items-center" style="border-bottom:2px solid #949694"><button class="plain" aria-label="New tab" style="width:68px"><svg width="28" height="28" viewBox="0 0 28 28"><path class="line" d="M14 0v28M0 14h28"/></svg></button></div>
  </nav>
  <div class="win-nav d-flex align-items-center">
    <button class="plain back-btn" aria-label="Back"><svg class="i32"><use href="#left"/></svg></button>
    <button class="plain" aria-label="Forward" style="color:#929492"><svg class="i32"><use href="#right"/></svg></button>
    <button class="plain" aria-label="Reload"><svg class="i32"><use href="#reload"/></svg></button>
    <button class="plain" aria-label="Home"><svg class="i32" viewBox="0 0 32 32"><path d="M2 17L16 3l14 14M6 15v14h20V15" fill="none" stroke="currentColor" stroke-width="4"/><path d="M13 17h6v12h-6z" fill="currentColor"/></svg></button>
    <div class="addr d-flex align-items-center">
      <button class="plain" aria-label="Protection"><svg width="28" height="30" viewBox="0 0 28 30"><path class="line" d="M3 4q11-5 22 0c1 12-2 20-11 24C5 24 2 16 3 4z"/><path d="M14 7v15q-6-5-6-13z" fill="currentColor"/></svg></button>
      <span class="border-start border-2 border-secondary" style="height:44px"></span>
      <button class="plain" aria-label="Site information"><svg width="28" height="28" viewBox="0 0 28 28"><circle class="line" stroke-width="2" cx="14" cy="14" r="13"/><path d="M14 12v10M14 6v4" stroke="currentColor" stroke-width="3"/></svg></button>
      <input type="text" aria-label="Firefox address" value="localhost:8888/app/endpoints/85ff56744b3c47819a0f982fb3aa0013/">
      <button class="plain" aria-label="Page actions"><svg width="32" height="8" viewBox="0 0 32 8"><circle cx="4" cy="4" r="4" fill="currentColor"/><circle cx="16" cy="4" r="4" fill="currentColor"/><circle cx="28" cy="4" r="4" fill="currentColor"/></svg></button>
      <button class="plain" aria-label="Pocket"><svg width="32" height="30" viewBox="0 0 32 30"><path class="line" d="M2 2h28v11c0 20-28 20-28 0zM9 11l7 7 7-7" stroke-width="3.500"/></svg></button>
      <button class="plain" aria-label="Bookmark"><svg class="i32"><use href="#star"/></svg></button>
    </div>
    <div class="ms-auto d-flex align-items-center">
      <button class="plain" aria-label="Library"><svg class="i32" viewBox="0 0 32 32"><path d="M3 2v28M9 6v24M15 6v24M20 6l9 24" stroke="currentColor" stroke-width="4" fill="none"/></svg></button>
      <button class="plain" aria-label="Sidebar"><svg class="i32" viewBox="0 0 32 32"><rect class="line" x="2" y="3" width="28" height="26" rx="5" stroke-width="4"/><path d="M16 3v26M6 10h6M6 15h6M6 20h6" stroke="currentColor" stroke-width="2.500"/></svg></button>
      <button class="plain" aria-label="Account"><svg class="i32" viewBox="0 0 32 32"><circle class="line" cx="16" cy="16" r="13" stroke-width="2.500"/><circle cx="16" cy="13" r="6" fill="currentColor"/><path d="M7 22q9-5 18 0-9 9-18 0z" fill="currentColor"/><circle cx="32" cy="2" r="7" fill="#00b3f4"/></svg></button>
      <span class="border-start border-2" style="height:68px;margin:0 10px 0 7px;border-color:#b4b8b3!important"></span>
      <button class="plain" aria-label="Menu"><svg width="26" height="26" viewBox="0 0 26 26"><path class="line" d="M0 2h26M0 13h26M0 24h26" stroke-width="4"/></svg></button><span class="ps-2"></span>
    </div>
  </div>

  <div class="view d-flex flex-grow-1">
    <div class="doc flex-grow-1 d-flex flex-column">
      <table class="records">
        <colgroup><col style="width:60px"><col style="width:38px"><col style="width:242px"><col style="width:140px"><col style="width:168px"><col style="width:588px"><col style="width:284px"><col style="width:198px"><col style="width:284px"><col style="width:284px"><col style="width:126px"><col style="width:226px"><col style="width:374px"></colgroup>
        <tbody id="rows"></tbody>
      </table>
      <div class="pager d-flex">
        <hr>
        <button class="plain" disabled aria-label="First page"><svg width="22" height="18" viewBox="0 0 22 18"><path class="line" stroke-width="4" d="M10 1L3 9l7 8M20 1l-7 8 7 8"/></svg></button>
        <button class="plain thin" disabled aria-label="Previous page"><svg width="12" height="18" viewBox="0 0 12 18"><path class="line" stroke-width="4" d="M10 1L3 9l7 8"/></svg></button>
        <input type="text" value="1" aria-label="Page">
        <span>/</span><span class="total">500</span>
        <button class="plain thin" aria-label="Next page"><svg width="12" height="18" viewBox="0 0 12 18"><path class="line" stroke-width="4" d="M2 1l7 8-7 8"/></svg></button>
        <button class="plain" aria-label="Last page"><svg width="22" height="18" viewBox="0 0 22 18"><path class="line" stroke-width="4" d="M2 1l7 8-7 8M12 1l7 8-7 8"/></svg></button>
      </div>
      <div class="d-flex flex-grow-1" style="min-height:0">
        <section class="plot">
          <div class="modebar d-flex justify-content-end">
            <button class="plain" aria-label="Download plot"><svg class="i32" viewBox="0 0 32 32"><path d="M3 8h6l3-5h9l3 5h5q3 0 3 3v14q0 3-3 3H3q-3 0-3-3V11q0-3 3-3zM16 10a7 7 0 1 0 .1 0zM16 13a4 4 0 1 1-.1 0z" fill="#bfc4c0" fill-rule="evenodd"/></svg></button>
            <button class="plain" aria-label="Toggle hover"><svg class="i32" viewBox="0 0 32 32"><path d="M0 16l8-8h24v16H8z" fill="#70766f"/></svg></button>
            <a href="#" aria-label="Plotly"><svg class="i32" viewBox="0 0 32 32"><rect width="32" height="32" rx="2" fill="#2c4168"/><path d="M8 16v11M14 21v6M20 16v11M26 12v15" stroke="#fff" stroke-width="3"/><path d="M7 7h3M13 7h3M19 7h3M25 7h3M7 12h3M13 12h3" stroke="#6ad0c5" stroke-width="2.500"/></svg></a>
          </div>
          <h2>Breeds Available by Rescue Type</h2>
          <div class="d-flex align-items-start">
            <svg class="pie" id="pie" viewBox="-280 -280 560 560" role="img" aria-label="Breeds pie chart"></svg>
            <ul class="legend-list" id="legend"></ul>
            <div class="legend-bar"></div>
          </div>
        </section>
        <section class="geo flex-grow-1">
          <svg viewBox="0 0 1435 788" preserveAspectRatio="xMinYMin slice" role="img" aria-label="Map of central Texas">
            <defs>
              <filter id="wiggle" x="-5%" y="-5%" width="110%" height="110%"><feTurbulence type="fractalNoise" baseFrequency=".07" numOctaves="2" seed="4"/><feDisplacementMap in="SourceGraphic" scale="18" xChannelSelector="R" yChannelSelector="G"/></filter>
              <filter id="bend" x="-5%" y="-5%" width="110%" height="110%"><feTurbulence type="fractalNoise" baseFrequency=".04" numOctaves="1" seed="7"/><feDisplacementMap in="SourceGraphic" scale="6" xChannelSelector="R" yChannelSelector="G"/></filter>
              <filter id="ragged" x="-5%" y="-5%" width="110%" height="110%"><feTurbulence type="fractalNoise" baseFrequency=".12" numOctaves="2" seed="9"/><feDisplacementMap in="SourceGraphic" scale="26" xChannelSelector="R" yChannelSelector="G"/></filter>
              <pattern id="hatch" width="16" height="16" patternUnits="userSpaceOnUse" patternTransform="rotate(40)"><path d="M0 0h16v16H0z" style="fill:#f9e0db;stroke:none"/><path d="M0 0v16" style="stroke:#f6bcb9;stroke-width:2"/></pattern>
              <linearGradient id="pin" x1="0" y1="0" x2="0" y2="1"><stop offset="0" stop-color="#3285c4"/><stop offset="1" stop-color="#0a78c6"/></linearGradient>
            </defs>
            <!-- west half -->
            <g transform="matrix(.4719 0 0 .523 -16 -24)">
              <g class="built" filter="url(#ragged)">
                <path d="M965 1200l50-10 20 50-50 20zM1125 1210l60 5-10 45-40-15zM560 1310l50 10-10 35-35-10zM445 1385h30v22h-30zM1225 1340l60 15 50 25-20 20-70-5zM1440 1310l60 10 20 40-50 5zM755 1470l40 0-10 25-35-5zM870 1480l45-30-15 40zM1150 1440l50 10-30 40zM1400 1410l40 30 10 60-30 20-30-50zM1540 1450l28 20v40l-28-10zM585 1420l30 20-20 30zM925 1300l25-5-5 18zM800 1190l16 0-2 16zM1090 1260l20 15-12 35zM1200 1390l30-5 5 30zM510 1415h16v14h-16zM730 1525l22 0-5 18zM930 1505l18 0-4 12z"/>
                <path d="M1060 1380l24 10-8 22zM1300 1370l50-6 10 22-30 6zM1320 1420l40-8-5 22zM1260 1440l26 4-10 14zM1060 1410l18 6-8 16zM1160 1290l14-4-2 20zM1290 1500l20 8-8 14zM1040 1505l18 2-8 12z"/>
              </g>
              <g class="wood" filter="url(#ragged)"><path d="M1190 750l40-30 30 35-45 25zM1430 790l45-20-5 25-35 15zM1385 820l40-20 5 30-30 5zM1345 1545l30-15 30 20v20h-60zM1430 1530l50-20 40 20-60 10zM1300 805l26-14-16 22zM1408 215l14 0-6 12z"/></g>
              <g class="water" filter="url(#wiggle)">
                <path d="M308 548L370 540 380 520 400 512 485 488 520 468 560 470 610 475 640 500 700 508 760 490 870 462 890 445 960 412 1030 395 1080 382 1140 360 1180 310 1220 300 1250 250 1290 238 1400 240 1470 220 1490 150 1440 125 1400 115 1370 85 1300 75 1270 52 1200 48"/>
                <path d="M583 803L640 808 700 780 712 745 765 720 780 705 830 675 885 660 920 690 985 695 1018 715 1060 695 1140 675 1155 650 1250 645 1330 620 1420 605"/>
                <path d="M1490 225L1520 250 1515 300 1540 335 1568 310M1505 590L1530 630 1568 650M1430 770L1480 780 1568 772M1295 820L1330 780 1375 762"/>
                <path d="M180 825L230 845 300 820 380 825 450 812 515 800"/>
                <path d="M583 825L540 865 530 890 490 905 470 990 430 1025 390 1035"/><path d="M36 1050L100 1055 150 1048 190 1070 230 1045 290 1018 340 1032 390 1035" stroke-dasharray="16 9"/>
                <path d="M970 975L1020 1005 1080 1022 1150 1045 1200 1050 1300 1035 1400 1025 1440 1030 1500 1005 1540 990 1568 965M395 1280L380 1330 375 1400 380 1450 385 1552M500 1480L510 1510 518 1552M730 1370L748 1430 740 1480 768 1552M680 1405L695 1460 760 1515M780 1168L840 1172 910 1158M790 1305L810 1330 890 1328 930 1316 960 1340M840 1405L900 1391 980 1381M1090 1250L1150 1262 1210 1262 1270 1238 1340 1250 1410 1250 1430 1300 1490 1285 1568 1315M1400 1130L1460 1135 1568 1135M590 1420L595 1480 605 1552M660 1310L655 1350M952 1095V1125M1130 1440L1190 1445V1552M1400 740V760"/>
              </g>
              <g class="minor" filter="url(#bend)">
                <path d="M476 46L510 135 520 185V240L535 280 540 395 570 457 566 487 583 510 578 650 565 718 580 802M36 514H70L95 504 300 508 392 514 430 497 485 485 528 465 568 472M570 457L610 445 685 437 755 408 878 377 912 318M883 46V180L879 190 882 270M1041 46V95L1030 122 970 185 915 292 945 290 970 277 1017 220 1170 206 1213 188V46M920 333L950 345 1018 405 1050 408 1083 435V463L1145 472 1157 484 1195 486 1230 508 1280 510 1312 528 1390 598"/>
                <path d="M592 514H820L920 570 929 588 908 603 813 600 780 635 730 668 685 750 633 797 583 797M929 588L985 603 1035 620 1210 622 1293 615 1333 598 1390 598 1422 605 1475 603 1505 588 1550 625 1568 626M1422 605L1400 710 1402 828 1378 860 1374 900 1272 993M1422 622L1505 650 1568 760M618 870L629 940 624 995 591 1022 587 1085 637 1122 640 1260 628 1295 658 1350 587 1420 583 1480 597 1552"/>
                <path d="M36 1062L60 1078 105 1140 243 1210 312 1310 315 1340 337 1370 342 1412 375 1438 397 1552M36 1218L75 1208 200 1215 243 1208M314 1145L355 1157H455L485 1183 505 1187 550 1170 640 1163 720 1110 780 1088 883 1075 905 1065M883 1078L930 1110 985 1158M640 1263L662 1268 725 1248 820 1250 830 1235 888 1215 910 1163 1040 1160 1087 1200 1125 1252 1195 1267 1250 1242M1060 1190V1225L1005 1250 955 1315V1345L975 1380 1040 1425 1115 1437 1180 1422 1263 1448 1380 1390 1430 1385 1505 1357 1568 1378M1272 995V1060L1245 1100 1232 1145 1250 1238M1263 1448L1340 1523 1385 1525 1410 1552M1508 234L1568 228"/>
              </g>
              <g class="major" filter="url(#bend)"><path d="M36 200L60 155 66 105 60 46M112 46V92M216 106L264 130 328 133 375 183 395 212 430 233H548L592 217 683 224 755 245 880 270 912 300 916 325 967 413 955 455 953 510 967 545 970 570 985 605 1035 655 1083 680 1125 725 1160 745 1163 828 1192 862 1194 895 1232 935 1250 975 1270 995M766 981L940 977H1128L1170 978 1215 992 1262 989M1270 997L1305 1033 1410 1040 1435 1028 1500 1024 1568 1010M1270 997L1225 1040 1185 1052 1125 1103 1113 1135 1065 1182 1087 1215 1092 1350 1125 1390 1113 1430 1128 1450 1118 1552M1213 188L1255 217 1310 235 1415 253 1508 230M1508 46L1512 85 1568 152"/></g>
              <g class="mway" filter="url(#bend)"><path d="M30 773L190 850 240 860 340 832 390 818 455 814 475 800 517 792 575 806 600 824 622 866 665 890 690 898 735 962 830 1020 883 1055 985 1085 997 1112 1070 1160 1130 1163 1190 1190 1250 1238 1305 1290 1335 1325 1362 1385 1430 1445 1460 1490 1483 1552M36 68L60 80 66 92H90M1450 1552L1510 1537 1568 1532"/></g>
              <g class="rail"><path d="M1508 46L1510 75 1540 90 1568 135M36 75L60 47"/></g>
            </g>
            <!-- east half -->
            <g transform="matrix(.4719 0 0 .523 724 -24)">
              <path d="M530 92L600 105 640 104 632 150 690 190 745 230 785 275 730 325 640 305 560 310 565 370 540 402 490 390 465 340 470 300 446 280 446 190 475 155 500 110z" style="fill:url(#hatch);stroke:#f8c3c0;stroke-width:2"/>
              <path d="M565 160L600 105 635 150 625 190 660 240 600 270 535 270 540 210z" style="fill:#f8ccc8;stroke:#f3b3b2;stroke-width:2" opacity=".7"/>
              <g class="built" filter="url(#ragged)"><path d="M770 65h36v28h-36zM110 1235l30 0 0 70-30-10zM70 1240l20-5 0 20zM155 1370l30 10-5 15zM0 1470l40 20 10 40-20 22-30 0zM460 760l30 20 10 50-20-20zM640 850l40-10-10 50-30-10zM450 910l40 10 0 30-30 0zM370 1075l20-14 8 20zM410 1070l60-20 30 40-20 40-40-10zM440 1180l16 6 0 40-16-20zM110 1355l22-6 0 16zM600 950l40 0 20 20-40 20z"/></g>
              <g class="wood" filter="url(#ragged)"><path d="M500 885l40-20 10 40-50 0zM20 645l40-20-10 20zM390 810l26 4-12 10zM1040 1140l26 5-5 20-20-5zM1150 735l20 20-14 8zM965 875l20 6-12 8zM440 1210l14 10-8 10zM500 668l20 6-6 8zM855 1045l18 8-10 8zM1100 1490l40 14-30 0zM420 1530l20 4-14 10z"/></g>
              <g class="water" filter="url(#wiggle)">
                <path d="M190 46L225 95 250 180 300 230 335 310 370 350 385 395 480 405 570 445 640 410 700 390 770 385 870 450 890 460 905 500 980 520 1060 570 1135 605 1190 510 1230 505 1300 550 1380 545"/>
                <path d="M440 100L460 170 500 210M565 60L590 90 640 130 710 100 780 150 790 220M620 180L680 210 740 240M1140 46L1165 100 1150 150 1200 190 1215 240 1275 290 1330 300 1310 340 1340 400 1330 450 1400 480 1450 560 1460 650 1500 700M1360 470L1440 460 1500 530M1340 260L1310 330"/>
                <path d="M250 510L310 545 410 560 435 610 500 670 600 690 690 688M200 550L270 582 350 565 410 560M290 638L380 660 500 720 620 710"/>
                <path d="M0 315L20 340 0 380 50 440 20 500M85 615L40 680 0 690 50 700 60 750M0 960L70 990 150 1000 170 970 280 960 330 920M430 905L440 950 500 930 530 950M0 1135L70 1150 120 1180 200 1185 250 1250 330 1220 420 1215 450 1260M0 1320L80 1310 140 1290 250 1330V1400L290 1440 350 1540M0 1210L50 1218 100 1190M430 1325L500 1370 560 1440 620 1480 700 1550M500 1090L600 1080 640 1060"/>
                <path d="M620 1010L680 1040 740 1050 800 1095 870 1100 880 1150 950 1200 1050 1190 1080 1230 1200 1240 1240 1280 1290 1320 1340 1380 1400 1440 1503 1445M820 700L870 655 900 650 1080 655 1135 605M800 330L820 390 870 440M560 920L550 990M820 76L910 50"/>
                <path d="M60 750L120 768 200 768 225 790 255 800 262 840 300 850 310 880 325 850 350 880 365 915 390 880 410 850 440 880 470 885M300 850L270 880 330 890M365 915L420 900 400 870" style="stroke-width:4"/>
              </g>
              <g class="lake" filter="url(#ragged)"><path d="M35 530l50 0 20 10-25 30-20 50-30-5zM10 500l20 5 10 30-20-5zM730 245l40-10-10 40 25 35-20 5-60-50zM660 388l70-3 0 18-70 5zM850 650l50-15-20 30-30 10zM1380 970l60 0 60-25v30l-60 10zM130 1290l40 0 50 40-30 5-60-20zM60 745l60 20-30 10-30-10zM1340 1265l20 0 4 24-20-4zM1095 745l18-5-12 24zM1050 570l60 10 30 20-60-10zM925 1085l16 0 0 18-16-2zM1040 840l20-8-10 20zM670 970l20 0 0 20-16-4z"/></g>
              <g class="minor" filter="url(#bend)">
                <path d="M245 46L237 350 193 465V580L200 612 145 810 65 990 0 1010M0 230L60 235M0 628L110 600 240 607M0 765L40 795 150 805 215 828 260 855 305 910 390 960 480 970 540 1010M595 46L610 95 650 145 740 170 790 230 830 290 900 345 1033 375 1045 352 1115 355 1165 342M865 170L800 330 795 360M960 172L1035 168 1085 178 1165 176 1235 160 1300 150 1350 160H1430L1503 174M1065 46L1085 110V170L1165 340 1150 410 1168 520M1033 375L1065 285 1115 245 1165 176M240 365L315 366 350 347 385 342 450 325 500 308"/>
                <path d="M890 345L880 430 865 485 840 510 810 620V690L838 770 865 920 905 1060V1130M455 540L490 537 530 530M490 650L520 720 545 790M470 690L520 705 650 708 700 698 810 705M400 945L425 905 465 900 490 865 530 840M400 945L430 975M530 790L600 770M520 320L518 360 550 365 560 340M440 1310L500 1270 620 1195 720 1155 775 1145 830 1128M440 1310L530 1370 570 1430 640 1470 735 1552M620 1150L628 1260 632 1380 648 1470 633 1552M872 1130L880 1155 912 1195 915 1260 835 1360 827 1552M1020 1215L992 1300 980 1370 1030 1405 1060 1470M1195 558L1160 600V690L1142 750 1158 810 1142 870"/>
                <path d="M1243 1280L1215 1325 1220 1440 1210 1552M1243 1278L1320 1245 1390 1160 1395 1135 1435 1096M1320 1248L1370 1260 1385 1290 1440 1245 1503 1236M0 1384L100 1378 180 1400 250 1440 330 1430M420 1315L410 1450 400 1552M1475 46L1425 200 1370 320M1385 800L1415 860 1475 890 1480 910 1503 875M480 975L490 1070 540 1080M650 890L690 835M640 900L690 940"/>
              </g>
              <g class="major" filter="url(#bend)"><path d="M458 46L510 55 675 66 830 50M0 150L100 270 225 320 240 365 290 400 330 435 385 468 410 498 435 502 455 550 472 610 468 690 485 735M558 345L566 400 545 440 530 490 545 550 565 598 640 645M690 943L730 935H850L945 980 975 1022 1035 1047 1125 1070 1200 1073 1330 1105 1435 1096 1470 1072 1503 1066M70 1005L87 1055 160 1050 200 1060 280 1055 380 1060 450 1030 520 1028M87 1055L55 1130 62 1230 52 1390 12 1552M540 1010L590 1030 665 1066 725 1070 830 1128 920 1130 1010 1185 1085 1263 1160 1270 1215 1292 1325 1300 1472 1425V1452M615 1045L612 1150M920 1130L1035 1047 1150 1028 1183 970 1250 910 1310 850 1375 795 1410 760 1500 720M1145 530H1170L1195 558M1142 870L1183 970 1202 1070 1215 1190 1243 1270M1210 46L1243 160 1250 200 1310 240 1368 310 1375 395 1503 545M540 930L510 970 512 1000M810 760L830 775 850 760"/></g>
              <g class="mway" filter="url(#bend)"><path d="M1010 46L985 90 975 140 930 210 888 310 840 335 787 372 735 445 705 500 665 570 640 665 615 712 612 790M845 330L860 297 895 295 910 325 895 355 855 350zM480 310L520 308M585 335L630 353 655 342 720 364 787 372M640 665L665 710 700 760 703 800 690 830 700 905 690 940 708 975 670 1030 665 1065 635 1105 632 1135 612 1155 618 1200 628 1265 597 1305 602 1325 540 1390 465 1450 478 1475 463 1500 470 1530M490 735L518 780 525 820 540 860 550 870M535 838L600 835 660 825 692 830M600 830L605 870M630 830V860M590 955L690 945M560 960V990M630 955L640 990M495 1030L570 1045 665 1040M530 1025L465 1078 486 1115M575 1020L530 1120 480 1220 455 1300 310 1440 140 1550M530 1128L570 1148 615 1153M0 1530H105L100 1552M380 1550L400 1540 530 1525 630 1498 800 1493 920 1480 960 1465 1503 1466M840 1130H910"/></g>
              <g class="rail" filter="url(#bend)"><path d="M0 135L20 175 60 185 68 225 130 290 225 310 245 350 305 353 375 343 425 293 455 312 515 306M835 46L853 85 855 120 870 150 865 190 882 310 868 360 865 425 875 455 838 510 805 610V665L835 750 862 910 858 945 900 1055 890 1110 905 1125 902 1160 930 1200 955 1212 1000 1200 1080 1255 1150 1260 1220 1292 1400 1298 1450 1282 1503 1298M990 46L975 140 888 310 830 340 800 358 740 338 660 345M885 330L910 385 960 445 1070 532H1185L1205 555 1222 612 1280 680 1300 710 1350 780 1380 795 1420 835 1455 885 1503 930M1503 425L1460 470V500L1440 540 1500 690V710L1380 795"/><path d="M1210 46L1228 140 1225 210 1278 275 1300 345 1345 370 1348 440 1395 485 1450 570 1503 635M1475 46V100L1435 150 1425 220 1370 320 1390 410 1503 545M670 790L835 760 1010 718 1125 698 1250 648 1310 628 1430 540 1460 520M805 643L700 670 640 685 610 740V790M182 685V655L200 615 235 606 330 615 420 650 470 700 510 790M1380 795L1195 1070 1170 1140 1172 1160 1118 1230 1120 1325 1075 1385 1057 1440 1060 1470 1036 1552M550 1025L510 1080 490 1170 470 1270 430 1310 290 1430 255 1480 105 1545M440 1310L520 1315 635 1308 690 1280 765 1270 795 1247 850 1268 935 1275 980 1258 1020 1215M300 1550L410 1545 500 1500 570 1495 625 1473 760 1487 885 1457 945 1468 1200 1472 1250 1482 1320 1460 1503 1455M765 1485L785 1515 795 1552M700 945L755 943 810 960 860 940M540 835L595 838V860M640 970L665 955"/></g>
            </g>
            <text x="1007" y="112" font-size="19" font-style="italic" style="fill:#8e2f33;stroke:#f9e0db">Fort Hood</text>
            <text x="1000" y="147" font-size="19">Killeen</text>
            <text x="1018" y="406" font-size="19">Round Rock</text>
            <text x="994" y="507" font-size="24">Austin</text>
            <text x="856" y="745" font-size="19">New Braunfels</text>
            <ellipse cx="1026" cy="470" rx="28" ry="10" fill="#555" opacity=".35" transform="rotate(-40 1026 470)"/>
            <path d="M1001 420c14 0 24 11 24 25 0 16-18 32-24 52-6-20-24-36-24-52 0-14 10-25 24-25z" style="fill:url(#pin);stroke:#1c6ea8;stroke-width:2"/><circle cx="1001" cy="444" r="8" fill="#fff"/>
          </svg>
          <div class="zoomer"><button class="plain" aria-label="Zoom in"><svg style="width:24px;height:24px" viewBox="0 0 24 24"><path d="M12 0v24M0 12h24" style="stroke:#000;stroke-width:5"/></svg></button><button class="plain" aria-label="Zoom out"><svg style="width:24px;height:24px" viewBox="0 0 24 24"><path d="M0 12h24" style="stroke:#000;stroke-width:5"/></svg></button></div>
        </section>
      </div>
    </div>
    <div class="vbar"><div></div></div>
  </div>
  <div class="hbar"><div></div><i></i></div>
</main>

<footer class="ground d-flex justify-content-center">
  <nav class="dock d-flex" aria-label="Dock">
    <button class="plain" aria-label="Show desktop"><svg width="84" height="70" viewBox="0 0 84 70"><radialGradient id="gDesk" cx=".7" cy=".55"><stop offset="0" stop-color="#68b7c4"/><stop offset="1" stop-color="#27609c"/></radialGradient><path d="M2 12V2h80v12" fill="none" stroke="#666" stroke-width="2"/><rect y="14" width="84" height="56" rx="4" fill="url(#gDesk)"/><path d="M12 70V56h60v14z" fill="#3a5468" stroke="#88a6b8" stroke-width="2"/></svg></button>
    <button class="plain ms-3" aria-label="Terminal"><svg width="68" height="70" viewBox="0 0 68 70"><rect x="1" y="1" width="66" height="68" rx="3" fill="#1c1c1c" stroke="#777" stroke-width="2"/><path d="M20 18c-4-3-10-2-10 2s10 4 10 8-7 5-11 2M15 13v22M27 38h15" fill="none" stroke="#e8e8e8" stroke-width="3"/></svg></button>
    <button class="plain" aria-label="Home folder"><svg width="82" height="66" viewBox="0 0 82 66"><path d="M4 14V6h4V0h28v6h43v10z" fill="#fff"/><path d="M0 13h82l-2 53H3z" fill="url(#gGrey)"/><path d="M27 43l14-16 14 16h-4v12h-7v-8h-6v8h-7V43z" fill="#8d8f8d"/></svg></button>
    <button class="plain" aria-label="Web browser"><svg width="80" height="84" viewBox="0 0 80 84"><radialGradient id="gEarth" cx=".5" cy=".15" r=".9"><stop offset="0" stop-color="#2fc0e8"/><stop offset=".6" stop-color="#1768b8"/><stop offset="1" stop-color="#0d3474"/></radialGradient><circle cx="38" cy="38" r="38" fill="url(#gEarth)"/><path d="M4 32l5-12 10-8 14-4 4 6-6 6 2 4-10 6-6 8-8 2zM12 42l12 2 6 8-4 8-6 12-4-4-1-12zM42 28l8-8 6 2 10-4 6 14-2 14-8 6-6-12-8-2-6-4zM30 4h14l-4 6-8-1z" fill="#123f63" opacity=".8"/><path d="M50 38l32 26-15 2 8 16-7 3-7-17-11 10z" fill="#f1f1f1"/></svg></button>
    <button class="plain" aria-label="Find"><svg width="76" height="72" viewBox="0 0 76 72"><path d="M44 40l28 28" stroke="#777" stroke-width="6"/><circle cx="25" cy="24" r="22" fill="#6a6a6a" stroke="#999" stroke-width="2"/><path d="M5 32A22 22 0 0 1 42 9Q34 30 5 32z" fill="#d9d9d9"/></svg></button>
    <button class="plain ms-3" aria-label="Folder"><svg width="82" height="66" viewBox="0 0 82 66"><path d="M4 14V6h4V0h28v6h43v10z" fill="#fff"/><path d="M0 13h82l-2 53H3z" fill="url(#gFold)"/></svg></button>
  </nav>
</footer>

<script src="https://cdn.jsdelivr.net/npm/bootstrap@5.3.0/dist/js/bootstrap.bundle.min.js"></script>
<script>
  const records = [
    ['19', '1 year', 'A692583', 'Dog', 'Catahoula/Boxer Mix', 'Brown/White', '2013-11-23', '2014-11-25 13:22:00', '2014-11-25T13:22:00', 'Duke', '', 'Adoption'],
    ['20', '1 year', 'A693126', 'Dog', 'American Bulldog Mix', 'White/Brown', '2013-12-02', '2015-02-28 17:42:00', '2015-02-28T17:42:00', 'George', '', 'Adoption'],
    ['22', '5 years', 'A615748', 'Dog', 'Labrador Retriever Mix', 'Black', '2009-12-11', '2015-10-26 18:13:00', '2015-10-26T18:13:00', 'Blackie', 'Suffering', 'Euthanasia'],
    ['7', '2 years', 'A673830', 'Dog', 'Pit Bull Mix', 'Black/White', '2012-03-03', '2014-03-19 15:15:00', '2014-03-19T15:15:00', '*Seth', 'Aggressive', 'Euthanasia'],
    ['23', '2 years', 'A692137', 'Dog', 'Pit Bull Mix', 'Blue/White', '2013-05-15', '2016-03-01 15:26:00', '2016-03-01T15:26:00', 'Shadow', 'Partner', 'Transfer']
  ];
  document.getElementById('rows').innerHTML = records.map(r =>
    `<tr><td><input type="radio" name="record" aria-label="Select record ${r[0]}"></td>` +
    r.map(v => `<td>${v}</td>`).join('') + '</tr>').join('');

  // Plotly colourway followed by its lighter and darker variants
  const hues = ['#4a6bfb', '#f64b37', '#00cf8e', '#a05cfc', '#ff9b55', '#00d3f4', '#ff5b89', '#aeee7c', '#ff8efc', '#ffc552',
    '#b9c6fd', '#fc9f92', '#00ffcb', '#e1c6fd', '#ffd5bb', '#66e9ff', '#ffc5d6', '#e6fcd2', '#ffffff', '#ffeab9',
    '#0528e0', '#b31b12', '#04694a', '#6314e6', '#f56613', '#04808f', '#f7064b', '#80cb39', '#f82df2', '#e2980a'];
  const names = ['Domestic Shorthair Mix', 'Pit Bull Mix', 'Labrador Retriever Mix', 'Chihuahua Shorthair Mix', 'Domestic Medium Hair Mix', 'German Shepherd Mix', 'Bat Mix', 'Domestic Longhair Mix', 'Australian Cattle Dog Mix', 'Bat', 'Siamese Mix', 'Dachshund Mix', 'Miniature Poodle Mix', 'Boxer Mix'];
  document.getElementById('legend').innerHTML = names.map((n, i) => `<li><i style="background:${hues[i]}"></i>${n}</li>`).join('');

  const shares = [8.01, 6.08, 5.88, 3.24, 2.41, 1.88, 1.52, 1.23, 1.08, .97, .9, .84, .74, .73, .71, .65, .62, .62, .62];
  for (let i = 0; i < 30; i++) shares.push(.51 - i * .0098);
  for (const sum of [4.1, 2.8, 2, 1.6, 1.4, 1.2, .9, .9, .9, .6, .6, .6, .6, .3, .3, .3, .3, .3, .3, .3, .3]) for (let i = 0; i < 30; i++) shares.push(sum / 30);
  const R = 270, pt = (deg, r) => [(-r * Math.sin(deg * Math.PI / 180)).toFixed(2), (-r * Math.cos(deg * Math.PI / 180)).toFixed(2)];
  const first = [[-54, -211], [-145, -175], [-200, -111], [-222, -48, 13]];
  let at = 0, slices = '', labels = '';
  shares.forEach((p, i) => {
    const end = Math.min(at + p * 3.6, 251.6);
    if (end > at) slices += `<path d="M0 0L${pt(at, R)}A${R} ${R} 0 0 0 ${pt(end, R)}z" fill="${hues[(i + 1) % 30]}"/>`;
    if (i < 4) {
      const [x, y, a] = first[i];
      labels += `<text x="${x}" y="${y}" font-size="24" transform="rotate(${a || 0} ${x} ${y})">${p}%</text>`;
    } else if (i < 22) {
      const t = Math.tan(Math.PI * p / 100), size = Math.round(.76 * 2 * R * t / (1 + 5.4 * t)), mid = (at + end) / 2;
      const [x, y] = pt(mid, R - size * 1.5 - 3);
      labels += `<text x="${x}" y="${y}" font-size="${size}" transform="rotate(${(90 - mid).toFixed(1)} ${x} ${y})">${p}%</text>`;
    }
    at = end;
  });
  document.getElementById('pie').innerHTML =
    `<path d="M0 0L0 ${-R}A${R} ${R} 0 0 1 ${pt(251.6, R)}z" fill="${hues[0]}"/>${slices}` +
    `<g font-family="Liberation Sans" text-anchor="middle" dominant-baseline="central" fill="#444">${labels}<text x="121" y="-90" font-size="24" fill="#fff">30.1%</text></g>`;
</script>
</body>
</html>
